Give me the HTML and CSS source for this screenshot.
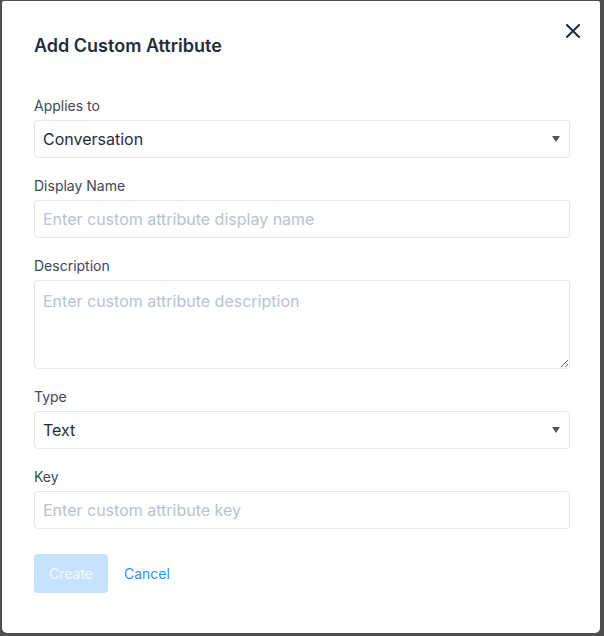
FILE: index.html
```html
<!DOCTYPE html>
<html>
<head>
<meta charset="utf-8">
<link rel="stylesheet" href="styles.css">
</head>
<body>
<div class="modal">
  <button class="close" aria-label="Close">
    <svg width="14" height="14" viewBox="0 0 14 14"><path d="M1 1 L13 13 M13 1 L1 13" stroke="#1f2d3d" stroke-width="2" stroke-linecap="square" fill="none"/></svg>
  </button>
  <h2 class="title">Add Custom Attribute</h2>
  <form class="form">
    <label class="field">
      <span class="label">Applies to</span>
      <span class="select-wrap">
        <select class="control"><option>Conversation</option></select>
        <svg class="caret" width="8" height="6" viewBox="0 0 8 6"><path d="M0 0 H8 L4 6 Z" fill="#555"/></svg>
      </span>
    </label>
    <label class="field">
      <span class="label">Display Name</span>
      <input class="control" type="text" placeholder="Enter custom attribute display name">
    </label>
    <label class="field">
      <span class="label">Description</span>
      <textarea class="control area" placeholder="Enter custom attribute description"></textarea>
    </label>
    <label class="field">
      <span class="label">Type</span>
      <span class="select-wrap">
        <select class="control"><option>Text</option></select>
        <svg class="caret" width="8" height="6" viewBox="0 0 8 6"><path d="M0 0 H8 L4 6 Z" fill="#555"/></svg>
      </span>
    </label>
    <label class="field">
      <span class="label">Key</span>
      <input class="control" type="text" placeholder="Enter custom attribute key">
    </label>
    <div class="actions">
      <button type="button" class="btn-create" disabled>Create</button>
      <button type="button" class="btn-cancel">Cancel</button>
    </div>
  </form>
</div>
</body>
</html>
```
FILE: styles.css
```css
html, body {
  margin: 0;
  padding: 0;
  background: #4f4f50;
  height: 636px;
  overflow: hidden;
}
body {
  font-family: Inter, "Noto Sans", sans-serif;
  padding: 1px 4px 3px 2px;
  box-sizing: border-box;
}
.modal {
  position: relative;
  background: #fff;
  height: 632px;
  border-radius: 2px 2px 5px 5px;
  padding: 33px 30px 0 32px;
  box-sizing: border-box;
}
.close {
  position: absolute;
  top: 23px;
  right: 20px;
  border: 0;
  background: none;
  padding: 0;
  width: 14px;
  height: 14px;
  cursor: pointer;
}
.close svg { display: block; }
.title {
  margin: 0;
  font-size: 18px;
  line-height: 24px;
  font-weight: 600;
  color: #1f2d3d;
}
.form {
  margin-top: 38px;
  display: flex;
  flex-direction: column;
  gap: 18px;
}
.field {
  display: flex;
  flex-direction: column;
  gap: 4px;
}
.label {
  font-size: 14px;
  line-height: 20px;
  color: #3c4858;
}
.select-wrap {
  position: relative;
  display: block;
}
.control {
  display: block;
  width: 100%;
  box-sizing: border-box;
  height: 38px;
  border: 1px solid #e0e6ed;
  border-radius: 4px;
  background: #fff;
  padding: 0 8px;
  font-family: Inter, "Noto Sans", sans-serif;
  font-size: 16px;
  color: #1f2d3d;
  outline: none;
  margin: 0;
}
select.control {
  appearance: none;
  -webkit-appearance: none;
}
.control::placeholder {
  color: #b7c3d2;
}
.area {
  height: 89px;
  padding: 8px 8px;
  line-height: 24px;
  resize: vertical;
}
.caret {
  position: absolute;
  right: 10px;
  top: 16px;
  pointer-events: none;
}
.actions {
  display: flex;
  align-items: center;
  gap: 16px;
  margin-top: 7px;
}
.btn-create {
  width: 74px;
  height: 39px;
  border: 0;
  border-radius: 4px;
  background: #c7e2fe;
  color: #f4f9ff;
  font-family: Inter, "Noto Sans", sans-serif;
  font-size: 14px;
  padding: 0;
}
.btn-cancel {
  border: 0;
  background: none;
  padding: 0;
  color: #1f93ff;
  font-family: Inter, "Noto Sans", sans-serif;
  font-size: 14px;
  cursor: pointer;
}
```
